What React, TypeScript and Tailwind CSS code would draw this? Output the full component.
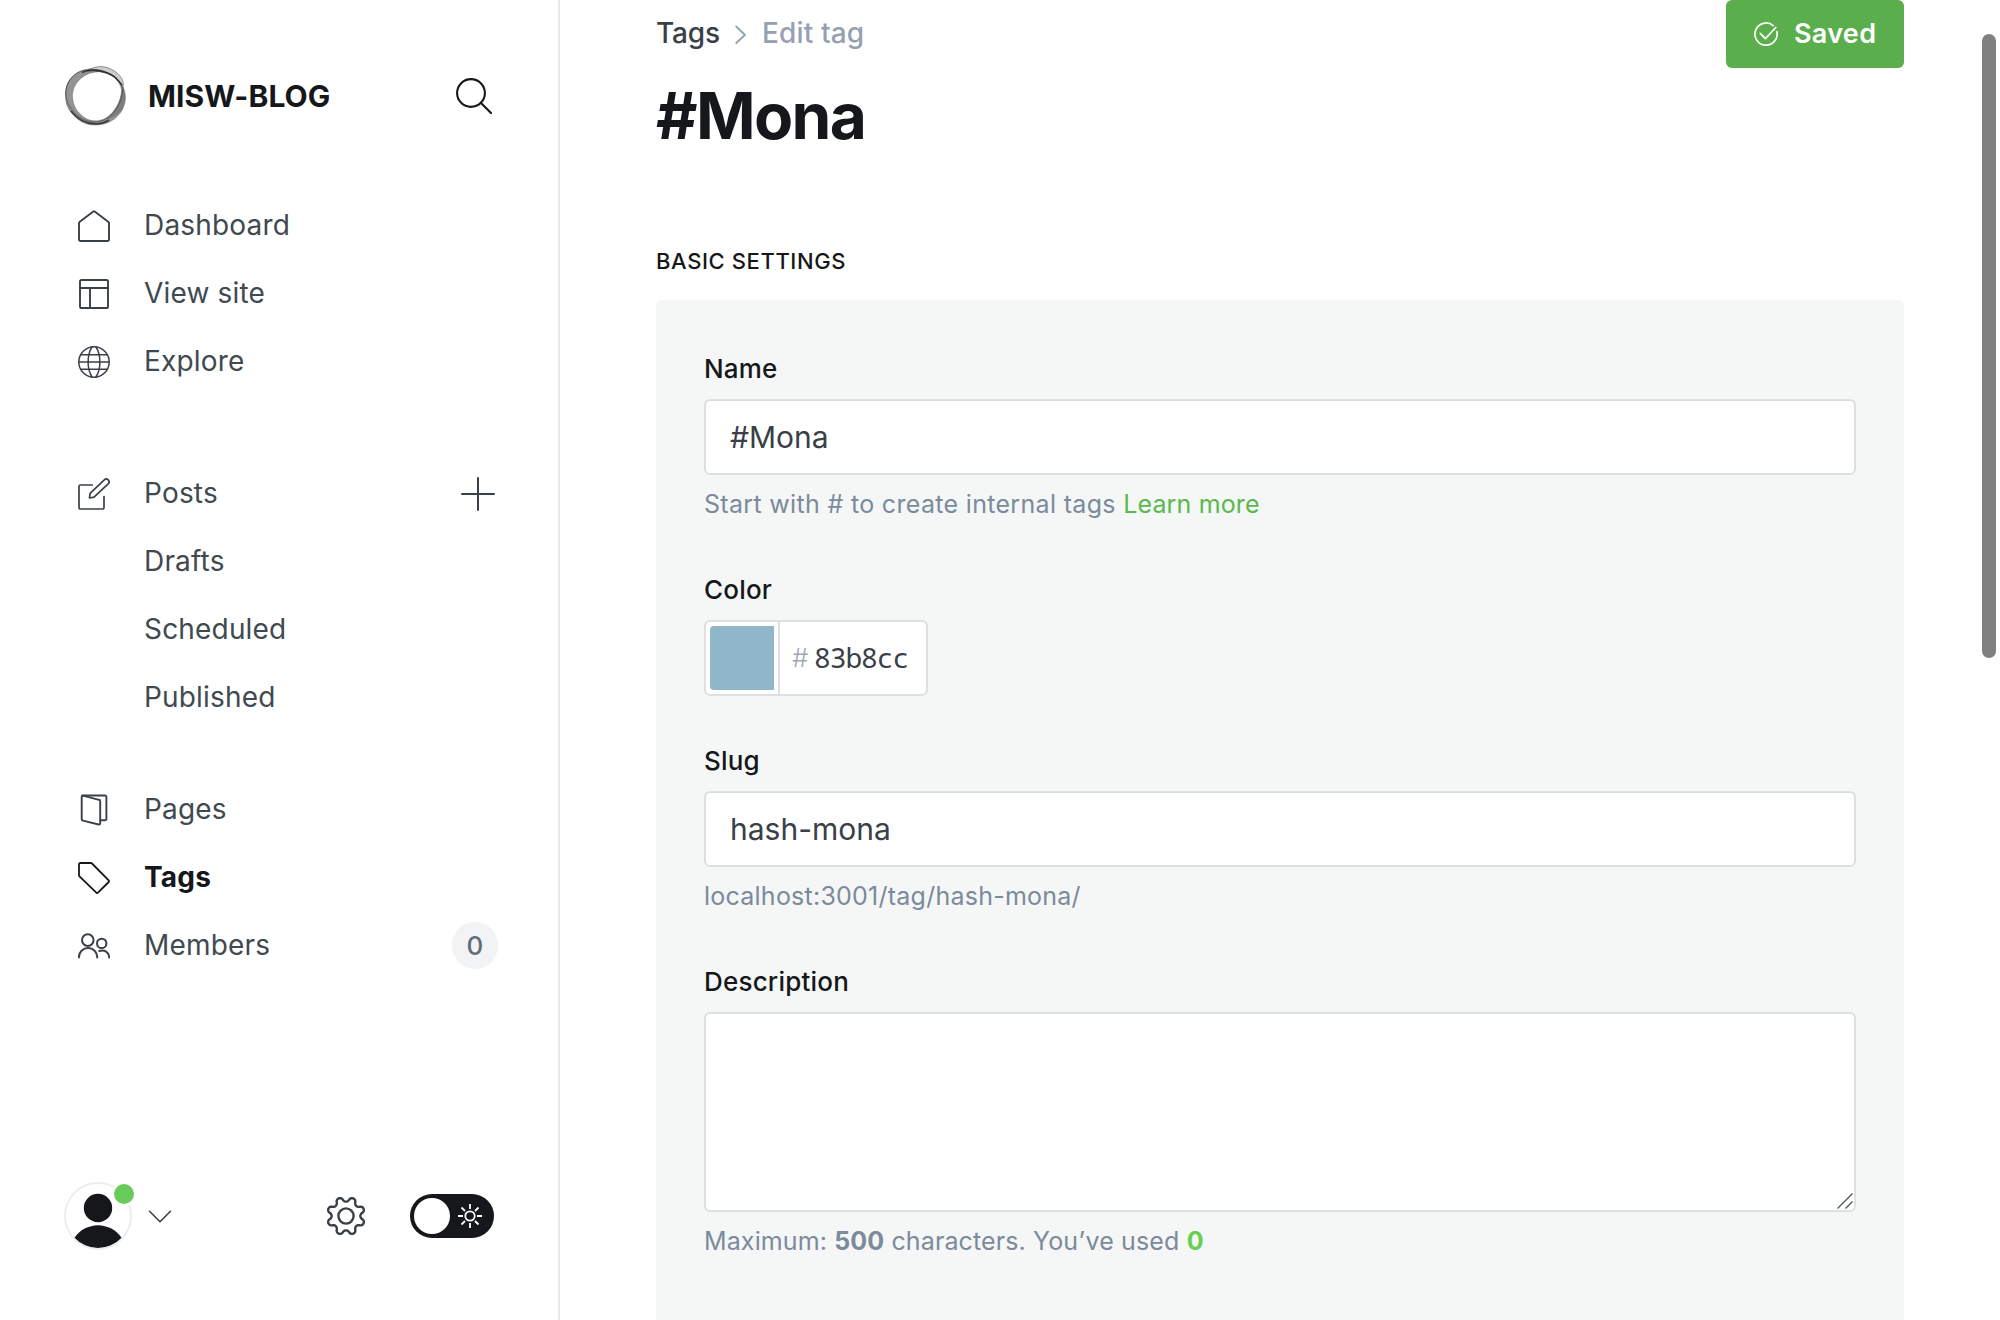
import type { ReactNode } from "react";

const stroke = {
  fill: "none",
  stroke: "currentColor",
  strokeWidth: 1.9,
  strokeLinecap: "round",
  strokeLinejoin: "round",
} as const;

function Icon({ children, w = 1.9 }: { children: ReactNode; w?: number }) {
  return (
    <svg className="size-8 shrink-0" viewBox="0 0 32 32" {...stroke} strokeWidth={w}>
      {children}
    </svg>
  );
}

const HomeIcon = () => (
  <Icon>
    <path d="M1 13.3a2 2 0 0 1 .8-1.6L15.3 1.5a1.2 1.2 0 0 1 1.4 0l13.5 10.2a2 2 0 0 1 .8 1.6V29.6a1.4 1.4 0 0 1-1.4 1.4H2.4A1.4 1.4 0 0 1 1 29.6z" />
  </Icon>
);
const LayoutIcon = () => (
  <Icon>
    <rect x="2" y="2" width="28" height="28" rx="1.6" />
    <path d="M2 10h28M12 10v20" />
  </Icon>
);
const GlobeIcon = () => (
  <Icon w={1.5}>
    <circle cx="16" cy="16" r="15.2" />
    <path d="M14 1C8.800 9 8.800 23 14 31M18 1c5.200 8 5.200 22 0 30M2.600 8.800h26.800M.8 16h30.400M2.600 23.200h26.800" />
  </Icon>
);
const PenIcon = () => (
  <Icon w={1.7}>
    <path d="M14.300 7H2.400A1.400 1.400 0 0 0 1 8.400v21.200A1.400 1.400 0 0 0 2.400 31h22.200a1.400 1.400 0 0 0 1.400-1.400V18.600" />
    <path d="m11.500 20 .6-4.700L26.300 1.900a2.750 2.750 0 0 1 3.900 3.900L16 19.200z" />
  </Icon>
);
const PagesIcon = () => (
  <Icon>
    <path d="M4.200 1.500H27a1.400 1.400 0 0 1 1.400 1.400v22a1.400 1.400 0 0 1-1.400 1.400h-4.400" />
    <path d="M4.900 1.700 21 5.800a1.500 1.500 0 0 1 1.200 1.500v22a1.200 1.200 0 0 1-1.500 1.200L4.900 26.600a1.500 1.500 0 0 1-1.200-1.500V2.700a1 1 0 0 1 1.200-1z" />
  </Icon>
);
const TagIcon = () => (
  <Icon w={1.8}>
    <path d="M2.200 1h10.700a1.500 1.500 0 0 1 1.100.500L30.700 18.300a1.200 1.200 0 0 1 0 1.700L20 30.700a1.200 1.200 0 0 1-1.700 0L1.500 14.300A1.500 1.500 0 0 1 1 13.200V2.200A1.200 1.200 0 0 1 2.200 1z" />
  </Icon>
);
const MembersIcon = () => (
  <Icon w={2}>
    <circle cx="9.800" cy="10.100" r="5.800" />
    <path d="M.900 27.500c0-5.500 4-9.400 9.200-9.400s9.200 3.900 9.200 9.400" />
    <circle cx="23.700" cy="13.400" r="4.700" />
    <path d="M21.300 21c5.200-1.900 9.800 1.400 9.800 6.500" />
  </Icon>
);

function LogoMark() {
  return (
    <svg className="size-[72px] shrink-0" viewBox="0 0 72 72" fill="none">
      <path
        fillRule="evenodd"
        fill="#000"
        fillOpacity="0.42"
        d="M5.500 34C5.500 20 16 9.500 31 9C45 8.500 57 16 62 25C66 33 66.500 41 62 50C56 60 46 65 35 65C24 65 16 59 10 51C6.500 46 5.500 40 5.500 34ZM12.500 36C12.500 44 16 51 23 56.500C30 62 39 62 46 58C54 53 61 42 61.500 30C60 20 51 13 40 12C26 11 12.500 22 12.500 36Z"
      />
      <path
        fill="#000"
        fillOpacity="0.2"
        d="M26 11C32 7 38 6 44 6.500C54 8.500 63 16 63.500 24L62 27C58 19 50 14 40 12Z"
      />
      <path fill="#000" fillOpacity="0.15" d="M62 25C66.500 33 66.500 42 62 50C57 56 52 58.500 46 59C55 53 61 42 61.500 30Z" />
      <g stroke="#111" strokeWidth="0.6">
        <path strokeOpacity="0.6" d="M26 11C36 5 46 5 55 11.500C63 17 64 22 63 28C62 42 56 54 44 60C34 64.500 24 61 17 55C8 47 5 38 6 30C7.500 19 16 11 26 10" />
        <path strokeOpacity="0.6" d="M5.500 34C5.500 20 16 9.500 31 9C45 9.500 57 16 62 25C66.500 33 66.500 42 62 50C57 60 46 65 35 65C24 65 16 59 10 51C6.500 46 5.500 40 5.500 34Z" />
        <path strokeOpacity="0.4" d="M12.500 36C12.500 44 16 51 23 56.500C30 62 39 62 46 58C54 53 61 42 61.500 30C60 20 51 13 40 12C26 11 12.500 22 12.500 36Z" />
      </g>
      <path stroke="#111" strokeOpacity="0.65" strokeWidth="1.500" d="M11 51C18 60 26 64 36 63.800C41 63.800 45 62.500 49 60M22 12.500C32 8 46 11 55 17L62 25" />
    </svg>
  );
}

const gearPath =
  Array.from({ length: 144 }, (_, i) => {
    const a = (i / 144) * Math.PI * 2;
    const c = Math.cos(8 * (a - Math.PI / 8));
    const r = 16.700 + 2.350 * Math.sign(c) * Math.pow(Math.abs(c), 0.6);
    return `${i ? "L" : "M"}${(20 + r * Math.cos(a)).toFixed(2)} ${(20 + r * Math.sin(a)).toFixed(2)}`;
  }).join("") + "Z";

function NavItem({ icon, label, active, right }: { icon?: ReactNode; label: string; active?: boolean; right?: ReactNode }) {
  return (
    <li className="flex h-[68px] items-center pr-[60px] pl-[78px]">
      <span className={`w-[66px] ${active ? "text-[#15171a]" : "text-[#394047]"}`}>{icon}</span>
      <span className={`flex-1 pb-0.5 text-[28px] leading-[34px] tracking-[0.18px] ${active ? "font-bold text-[#15171a]" : "text-[#414950]"}`}>
        {label}
      </span>
      {right}
    </li>
  );
}

function Sidebar() {
  return (
    <aside className="flex w-[560px] shrink-0 flex-col border-r-2 border-[#e8eaeb] pt-[60px] pb-[70px]">
      <header className="flex h-[72px] items-center pr-[66px] pl-[60px]">
        <LogoMark />
        <span className="ml-4 flex-1 text-[30px] leading-9 font-bold tracking-[0.1px] text-[#15171a]">MISW-BLOG</span>
        <svg className="size-9 text-[#15171a]" viewBox="0 0 36 36" {...stroke} strokeWidth={2.1}>
          <circle cx="15" cy="15" r="13.900" />
          <path d="m25 25 10 10" />
        </svg>
      </header>
      <nav className="mt-[60px] flex flex-col gap-[44px]">
        <ul className="mb-5">
          <NavItem icon={<HomeIcon />} label="Dashboard" />
          <NavItem icon={<LayoutIcon />} label="View site" />
          <NavItem icon={<GlobeIcon />} label="Explore" />
        </ul>
        <ul>
          <NavItem
            icon={<PenIcon />}
            label="Posts"
            right={
              <svg className="mr-[3px] size-[34px] text-[#394047]" viewBox="0 0 34 34" {...stroke} strokeWidth={2}>
                <path d="M17 1v32M1 17h32" />
              </svg>
            }
          />
          <NavItem label="Drafts" />
          <NavItem label="Scheduled" />
          <NavItem label="Published" />
        </ul>
        <ul>
          <NavItem icon={<PagesIcon />} label="Pages" />
          <NavItem icon={<TagIcon />} label="Tags" active />
          <NavItem
            icon={<MembersIcon />}
            label="Members"
            right={
              <span className="mb-px flex h-[47px] w-[46px] items-center justify-center rounded-full bg-[#f1f3f4] text-[26px] leading-8 font-medium text-[#626d79]">
                0
              </span>
            }
          />
        </ul>
      </nav>
      <footer className="mt-auto flex h-[68px] items-center pr-16 pl-16">
        <div className="relative size-[68px]">
          <svg className="size-[68px]" viewBox="0 0 68 68">
            <circle cx="34" cy="34" r="33" fill="#fff" stroke="#ebeeef" strokeWidth="2" />
            <circle cx="34" cy="26" r="14.200" fill="#15171a" />
            <path d="M10.500 55.700A28.500 28.500 0 0 1 57.500 55.700A32 32 0 0 1 10.500 55.700Z" fill="#15171a" />
          </svg>
          <span className="absolute top-0 left-12 size-6 rounded-full border-2 border-white bg-[#69cc5a]" />
        </div>
        <svg className="ml-[16px] h-[14px] w-6 text-[#394047]" viewBox="0 0 24 14" {...stroke} strokeWidth={1.6}>
          <path d="m1.500 2.300 10.500 10.400L22.500 2.300" />
        </svg>
        <svg className="ml-[154px] size-10 text-[#394047]" viewBox="0 0 40 40" {...stroke} strokeWidth={2.400}>
          <path d={gearPath} />
          <circle cx="20" cy="20" r="7.600" />
        </svg>
        <div className="ml-auto flex h-11 w-[84px] items-center justify-between rounded-full bg-[#15171a] pr-3 pl-1">
          <span className="size-9 rounded-full bg-white" />
          <svg className="size-6 text-white" viewBox="0 0 24 24" {...stroke} strokeWidth={1.800} strokeLinecap="butt">
            <circle cx="12" cy="12" r="4.700" />
            <path d="M12 0v5M12 19v5M0 12h5M19 12h5M3.500 3.500 7 7M17 17l3.500 3.500M3.500 20.500 7 17M17 7l3.500-3.500" />
          </svg>
        </div>
      </footer>
    </aside>
  );
}

const Label = ({ children }: { children: ReactNode }) => (
  <label className="mb-[15px] block text-[26px] leading-[30px] font-medium tracking-[0.2px] text-[#15171a]">{children}</label>
);
const Hint = ({ children }: { children: ReactNode }) => (
  <p className="mt-[15px] mb-[6px] text-[25px] leading-[29px] whitespace-pre text-[#7c8a9c]">{children}</p>
);
const field = "block w-full rounded-md border-2 border-[#dce0e0] bg-white text-[30px] text-[#394047] outline-none";

export default function App() {
  return (
    <div className="relative flex h-[1320px] w-[2000px] overflow-hidden bg-white font-['Inter',sans-serif] antialiased">
      <Sidebar />
      <main className="flex min-w-0 flex-1 flex-col px-24">
        <div className="flex h-[68px] items-center text-[28px] leading-[34px] font-medium">
          <span className="w-[78px] pb-0.5 tracking-[-0.200px] text-[#394047]">Tags</span>
          <svg className="h-5 w-[14px] text-[#95a1b1]" viewBox="0 0 14 20" {...stroke} strokeWidth={1.800}>
            <path d="M2.200 2.500 11 11l-8.800 8" />
          </svg>
          <span className="ml-[14px] flex-1 pb-0.5 tracking-[0.15px] text-[#95a1b1]">Edit tag</span>
          <button className="flex h-[68px] w-[178px] items-center rounded-md bg-[#5aaf4c] pl-7 text-[27px] font-semibold tracking-[0.3px] text-white">
            <svg className="mr-4 size-6" viewBox="0 0 24 24" {...stroke} strokeWidth={1.700}>
              <path d="M19.200 3.600A11.100 11.100 0 1 0 22.900 9.700" />
              <path d="m6.300 11.400 5.100 5.300L21.800 5.500" />
            </svg>
            Saved
          </button>
        </div>
        <h1 className="mt-[9px] text-[64px] leading-[77px] font-bold tracking-[-1.600px] text-[#15171a]">#Mona</h1>
        <h4 className="mt-[94px] text-[22px] leading-[26px] font-medium tracking-[0.6px] text-[#15171a]">BASIC SETTINGS</h4>
        <section className="mt-[26px] flex flex-1 flex-col gap-[50px] rounded-t-md bg-[#f4f7f6] px-12 pt-[54px]">
          <div>
            <Label>Name</Label>
            <input className={`${field} h-[76px] px-6`} defaultValue="#Mona" />
            <Hint>
              <span className="tracking-[0.320px]">Start with # to create internal tags </span>
              <a className="tracking-[0.150px] text-[#5cb84e]">Learn more</a>
            </Hint>
          </div>
          <div>
            <Label>Color</Label>
            <div className="flex h-[76px] w-[224px] items-stretch rounded-md border-2 border-[#dce0e0] bg-white">
              <div className="w-[74px] border-r-2 border-[#dce0e0] p-1">
                <div className="size-16 rounded-l-[4px] bg-[#8fb6c9]" />
              </div>
              <div className="flex items-center pl-3 text-[#394047]">
                <span className="w-[22px] pb-0.5 text-[26px] font-light text-[#9da8b4]">#</span>
                <span className="pb-0.5 font-['Noto_Sans_Mono','DejaVu_Sans_Mono',monospace] text-[28px] tracking-[-1.100px]">83b8cc</span>
              </div>
            </div>
          </div>
          <div>
            <Label>Slug</Label>
            <input className={`${field} h-[76px] px-6`} defaultValue="hash-mona" />
            <Hint>
              <span className="tracking-[0.240px]">localhost:3001/tag/hash-mona/</span>
            </Hint>
          </div>
          <div>
            <Label>Description</Label>
            <div className="relative">
              <textarea className={`${field} h-[200px] resize-none px-6 py-4`} />
              <svg className="absolute right-[2px] bottom-[2px] size-[18px]" viewBox="0 0 18 18" fill="none" stroke="#555" strokeWidth="1.400">
                <path d="M1.500 16.500 16.500 1.500M9.500 16.500l7-7" />
              </svg>
            </div>
            <Hint>
              <span className="tracking-[0.120px]">
                Maximum: <b className="font-bold">500</b> characters. You’ve used <b className="text-[#66cf50]">0</b>
              </span>
            </Hint>
          </div>
        </section>
      </main>
      <div className="absolute top-[34px] right-1 h-[624px] w-[14px] rounded-full bg-[#808080]" />
    </div>
  );
}
